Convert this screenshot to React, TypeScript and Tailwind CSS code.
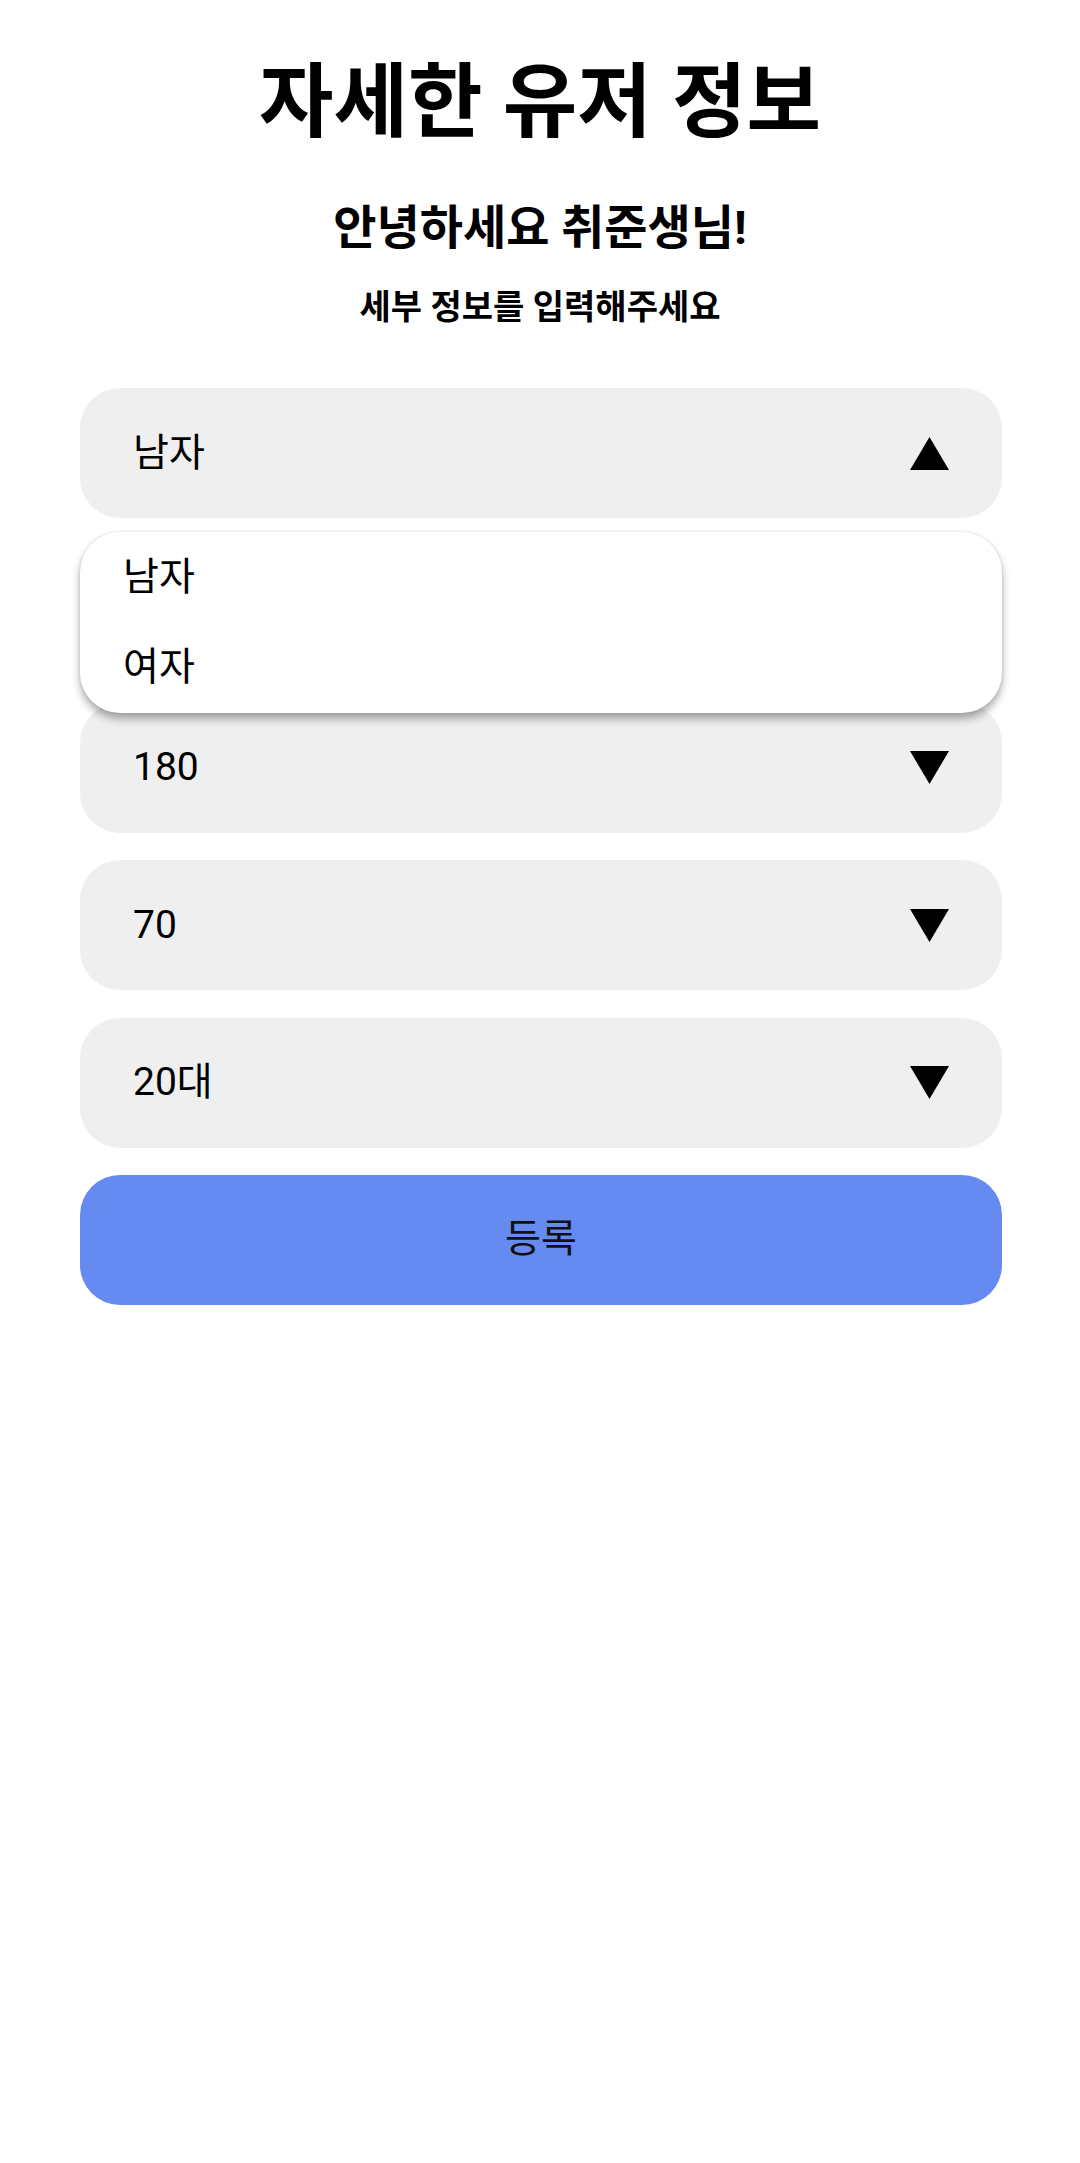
import { useState } from "react";

/*
  자세한 유저 정보 입력 화면. 성별 드롭다운이 펼쳐진 상태.
  셀렉트 박스 = 회색 알약 + 오른쪽 삼각형, 등록 버튼은 파란 알약.
*/

function Triangle({ up = false }: { up?: boolean }) {
  return (
    <svg width="39" height="33" viewBox="0 0 39 33" className="shrink-0">
      {up ? <polygon points="19.5,0 39,33 0,33" fill="#000" /> : <polygon points="0,0 39,0 19.5,33" fill="#000" />}
    </svg>
  );
}

function SelectBox({ value, open = false }: { value: string; open?: boolean }) {
  return (
    <div className="flex h-[130px] items-center justify-between rounded-[40px] bg-[#efefef] pl-[53px] pr-[53px]">
      <span className="text-[39px] leading-none text-black">{value}</span>
      <Triangle up={open} />
    </div>
  );
}

export default function App() {
  const [gender] = useState("남자");
  const options = ["남자", "여자"];

  return (
    <div
      className="min-h-[2163px] w-[1080px] bg-white"
      style={{ fontFamily: 'Roboto, "Noto Sans CJK KR", sans-serif' }}
    >
      <div className="flex flex-col items-center pt-[62px]">
        <h1 className="text-[81px] font-bold leading-none text-black">자세한 유저 정보</h1>
        <h2 className="mt-[61px] text-[47px] font-bold leading-none text-black">안녕하세요 취준생님!</h2>
        <p className="mt-[39px] text-[34px] font-bold leading-none text-black">세부 정보를 입력해주세요</p>
      </div>

      <div className="relative mx-[80px] mt-[64px] flex w-[922px] flex-col gap-[27.4px]">
        <SelectBox value={gender} open />
        <SelectBox value="" />
        <SelectBox value="180" />
        <SelectBox value="70" />
        <SelectBox value="20대" />
        <button className="flex h-[130px] items-center justify-center rounded-[40px] bg-[#658af0] text-[39px] leading-none text-[#111]">
          등록
        </button>

        {/* 펼쳐진 성별 목록 */}
        <ul className="absolute left-0 top-[144px] flex h-[181px] w-full flex-col rounded-[40px] bg-white pl-[43px] shadow-[0_6px_9px_rgba(0,0,0,0.32),0_0_3px_rgba(0,0,0,0.12)]">
          {options.map((o) => (
            <li key={o} className="flex h-[91px] items-center text-[39px] leading-none text-black">
              {o}
            </li>
          ))}
        </ul>
      </div>
    </div>
  );
}
